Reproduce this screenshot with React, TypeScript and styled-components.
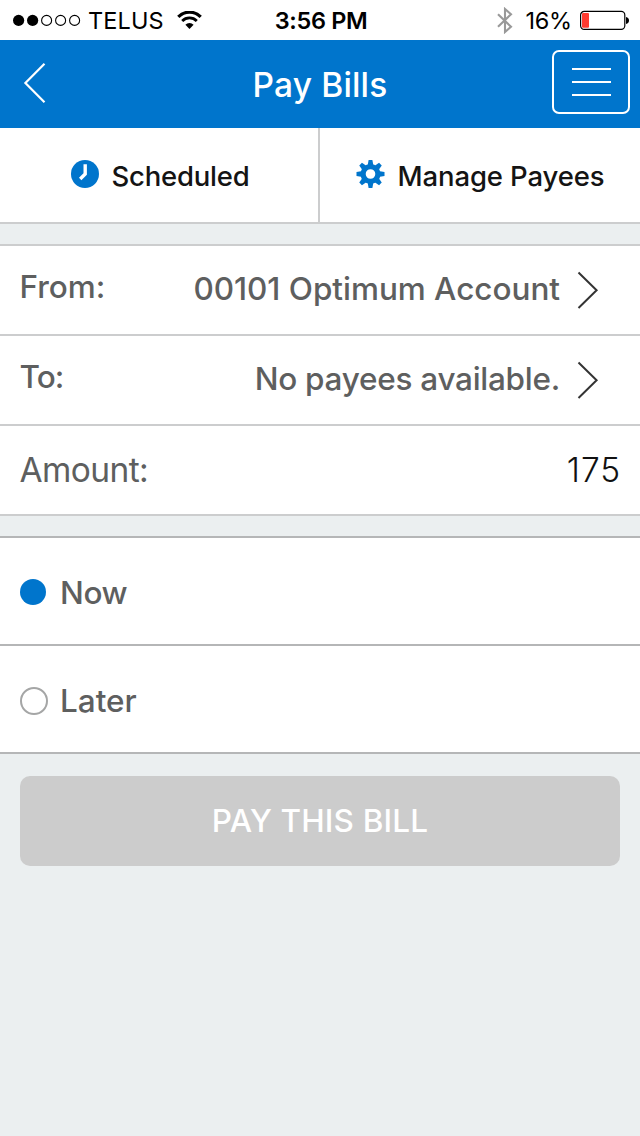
import React from 'react';
import styled, { createGlobalStyle } from 'styled-components';

const BLUE = '#0075cc';
const LINE = '#cccdce';
const LINE_DARK = '#b5b6b7';
const TEXT = '#5e5f5f';

const GlobalStyle = createGlobalStyle`
  * { box-sizing: border-box; }
  body {
    margin: 0;
    background: #ebeff0;
    font-family: Inter, 'Liberation Sans', sans-serif;
  }
  svg { display: block; flex: none; }
`;

const Screen = styled.main`
  width: 640px;
  min-height: 1136px;
  background: #ebeff0;
`;

const Label = styled.span<{ $size?: number; $weight?: number; $spacing?: number; $lift?: number }>`
  font-size: ${p => p.$size ?? 31.5}px;
  font-weight: ${p => p.$weight ?? 500};
  letter-spacing: ${p => p.$spacing ?? 0}px;
  padding-bottom: ${p => p.$lift ?? 0}px;
  line-height: 40px;
  white-space: nowrap;
`;

const StatusBar = styled.div`
  display: grid;
  grid-template-columns: 1fr auto 1fr;
  align-items: center;
  height: 40px;
  padding: 0 11px 0 13px;
  background: #fff;
  color: #000;
  ${Label} { line-height: 38px; padding-top: 2px; }
`;

const StatusGroup = styled.div<{ $end?: boolean }>`
  display: flex;
  align-items: center;
  justify-content: ${p => (p.$end ? 'flex-end' : 'flex-start')};
  gap: ${p => (p.$end ? 8 : 7)}px;
  svg + ${Label} { margin-right: ${p => (p.$end ? 0 : 6)}px; }
  svg:first-child { margin-right: ${p => (p.$end ? 4 : 0)}px; }
`;

const Header = styled.header`
  display: grid;
  grid-template-columns: 1fr auto 1fr;
  align-items: center;
  height: 88px;
  padding: 0 10px;
  background: ${BLUE};
  color: #fff;
`;

const Title = styled(Label)`
  padding-top: 1px;
`;

const BackButton = styled.button`
  justify-self: start;
  margin-left: 13px;
  margin-top: -2px;
  padding: 0;
  border: 0;
  background: none;
  color: inherit;
`;

const MenuButton = styled.button`
  justify-self: end;
  display: flex;
  flex-direction: column;
  align-items: center;
  justify-content: center;
  gap: 10.6px;
  width: 78px;
  height: 64px;
  margin-top: -4px;
  padding: 0 0 0 1px;
  border: 2px solid #fff;
  border-radius: 7px;
  background: none;
`;

const MenuLine = styled.span`
  width: 39px;
  height: 2px;
  background: #fff;
`;

const Tabs = styled.nav`
  display: flex;
  height: 96px;
  border-bottom: 2px solid ${LINE};
  background: #fff;
  color: #141414;
`;

const Tab = styled.div<{ $divider?: boolean }>`
  display: flex;
  align-items: center;
  justify-content: center;
  flex: 0 0 320px;
  gap: ${p => (p.$divider ? 12 : 13)}px;
  padding: ${p => (p.$divider ? '2px 0 0 3px' : '2px 0 0')};
  border-right: ${p => (p.$divider ? `2px solid ${LINE}` : '0')};
  svg { margin-top: -5px; }
`;

const Group = styled.section<{ $dark?: boolean }>`
  margin-top: 20px;
  border-top: 2px solid ${p => (p.$dark ? LINE_DARK : LINE)};
  background: #fff;
  color: ${TEXT};
`;

const Field = styled.div`
  display: flex;
  align-items: center;
  justify-content: space-between;
  height: 90px;
  padding: 0 20px 0 19.5px;
  border-bottom: 2px solid ${LINE};
`;

const FieldValue = styled.div`
  display: flex;
  align-items: center;
  gap: 17px;
  padding-right: 21px;
`;

const Amount = styled(Label)`
  margin-right: -1px;
  color: #111;
`;

const Option = styled.label`
  display: flex;
  align-items: center;
  height: 108px;
  padding: 4px 20px 0;
  border-bottom: 2px solid ${LINE_DARK};
`;

const Radio = styled.span<{ $on?: boolean }>`
  width: ${p => (p.$on ? 26 : 28)}px;
  height: ${p => (p.$on ? 26 : 28)}px;
  margin-right: ${p => (p.$on ? 14 : 12)}px;
  margin-bottom: ${p => (p.$on ? 2 : 0)}px;
  border: ${p => (p.$on ? '0' : '2px solid #a5a6a6')};
  border-radius: 50%;
  background: ${p => (p.$on ? BLUE : '#fff')};
`;

const PayButton = styled.button`
  display: flex;
  align-items: center;
  justify-content: center;
  width: 600px;
  height: 90px;
  margin: 22px 20px 0;
  padding: 0;
  border: 0;
  border-radius: 10px;
  background: #ccc;
  color: #fff;
  font-family: inherit;
`;

const Signal = () => (
  <svg width="68" height="12" viewBox="0 0 68 12">
    {[0, 1, 2, 3, 4].map(i =>
      i < 2 ? (
        <circle key={i} cx={5.6 + i * 14} cy="6.4" r="5.6" fill="#000" />
      ) : (
        <circle key={i} cx={5.6 + i * 14} cy="6.4" r="5" fill="none" stroke="#000" strokeWidth="1.1" />
      ),
    )}
  </svg>
);

const Wifi = () => (
  <svg width="25" height="18" viewBox="0 0 25 18">
    <path d="M1.3 5.9 A15.6 15.6 0 0 1 23.7 5.9" fill="none" stroke="#000" strokeWidth="3.2" />
    <path d="M5.2 10 A10.2 10.2 0 0 1 19.8 10" fill="none" stroke="#000" strokeWidth="2.8" />
    <path d="M12.5 18 L8.4 13.7 A5.8 5.8 0 0 1 16.6 13.7 Z" fill="#000" />
  </svg>
);

const Bluetooth = () => (
  <svg width="16" height="27" viewBox="0 0 16 27">
    <path d="M1 7.2 L14 19.8 L8 25 V2 L14 7.2 L1 19.8" fill="none" stroke="#999" strokeWidth="2.1" />
  </svg>
);

const Battery = () => (
  <svg width="49" height="20" viewBox="0 0 49 20">
    <rect x="0.6" y="1.4" width="44.2" height="18" rx="3.6" fill="none" stroke="#000" strokeWidth="1.2" />
    <rect x="2" y="3" width="7" height="14.8" rx="1" fill="#ff3b30" />
    <path d="M46 7 C48 7.5 49 8.8 49 10.5 C49 12.2 48 13.5 46 14 Z" fill="#000" />
  </svg>
);

const Clock = () => (
  <svg width="28" height="28" viewBox="0 0 28 28">
    <circle cx="14" cy="14" r="14" fill={BLUE} />
    <path d="M14.2 4.2 V14 L9.2 19" fill="none" stroke="#fff" strokeWidth="3.4" />
  </svg>
);

const Gear = () => (
  <svg width="29" height="28" viewBox="-14.5 -14 29 28">
    {[0, 45, 90, 135, 180, 225, 270, 315].map(a => (
      <path key={a} d="M-3 -8 L-1.9 -14 H1.9 L3 -8 Z" fill={BLUE} transform={`rotate(${a})`} />
    ))}
    <circle r="7.4" fill="none" stroke={BLUE} strokeWidth="5.2" />
  </svg>
);

const Chevron = () => (
  <svg width="22" height="38" viewBox="0 0 22 38">
    <path d="M1.5 1.5 L19.6 19.3 L1.5 37" fill="none" stroke="#333" strokeWidth="2" />
  </svg>
);

export default function App() {
  return (
    <Screen>
      <GlobalStyle />
      <StatusBar>
        <StatusGroup>
          <Signal />
          <Label $size={23.5} $weight={400} $spacing={0.1}>TELUS</Label>
          <Wifi />
        </StatusGroup>
        <Label $size={23.5} $weight={600} $spacing={-0.35}>3:56 PM</Label>
        <StatusGroup $end>
          <Bluetooth />
          <Label $size={23.5} $weight={400} $spacing={-0.2}>16%</Label>
          <Battery />
        </StatusGroup>
      </StatusBar>

      <Header>
        <BackButton aria-label="Back">
          <svg width="23" height="42" viewBox="0 0 23 42">
            <path d="M21.5 1.8 L2.4 21 L21.5 40.2" fill="none" stroke="#fff" strokeWidth="2.2" />
          </svg>
        </BackButton>
        <Title $size={33.5} $spacing={0.15}>Pay Bills</Title>
        <MenuButton aria-label="Menu">
          <MenuLine />
          <MenuLine />
          <MenuLine />
        </MenuButton>
      </Header>

      <Tabs>
        <Tab $divider>
          <Clock />
          <Label $size={27.5} $spacing={-0.2}>Scheduled</Label>
        </Tab>
        <Tab>
          <Gear />
          <Label $size={27.5} $spacing={-0.12}>Manage Payees</Label>
        </Tab>
      </Tabs>

      <Group>
        <Field>
          <Label $lift={6}>From:</Label>
          <FieldValue>
            <Label $lift={2} $spacing={-0.03}>00101 Optimum Account</Label>
            <Chevron />
          </FieldValue>
        </Field>
        <Field>
          <Label $lift={6} $spacing={-0.9}>To:</Label>
          <FieldValue>
            <Label $lift={2} $spacing={-0.27}>No payees available.</Label>
            <Chevron />
          </FieldValue>
        </Field>
        <Field>
          <Label $size={33.5} $weight={400} $spacing={-0.6}>Amount:</Label>
          <Amount $size={33.5} $weight={300} $spacing={0.9}>175</Amount>
        </Field>
      </Group>

      <Group $dark>
        <Option>
          <Radio $on />
          <Label $spacing={-0.4}>Now</Label>
        </Option>
        <Option>
          <Radio />
          <Label>Later</Label>
        </Option>
      </Group>

      <PayButton disabled>
        <Label $spacing={0.15}>PAY THIS BILL</Label>
      </PayButton>
    </Screen>
  );
}
